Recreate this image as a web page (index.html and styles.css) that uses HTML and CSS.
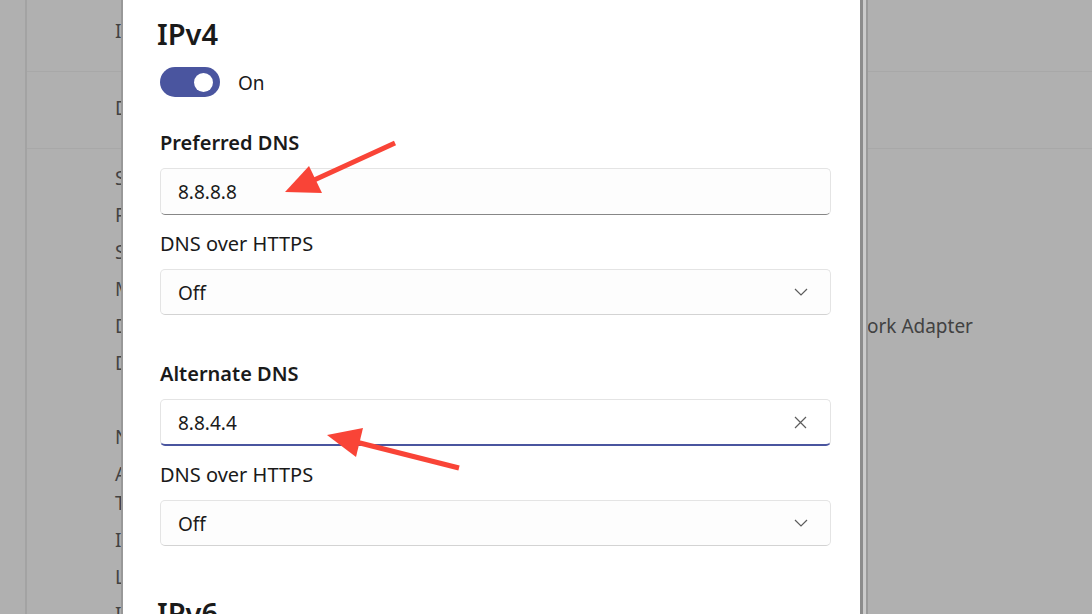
FILE: index.html
```html
<!DOCTYPE html>
<html lang="en">
<head>
<meta charset="utf-8">
<title>Edit DNS settings</title>
<link rel="stylesheet" href="styles.css">
</head>
<body>
<div class="page">
  <div class="rail"></div>
  <div class="main">
    <div class="row row-first"><span class="lbl">IP assignment:</span></div>
    <div class="row row-second"><span class="lbl">DNS server assignment:</span></div>
    <div class="props">
      <div class="prop"><span class="lbl">SSID:</span></div>
      <div class="prop"><span class="lbl">Protocol:</span></div>
      <div class="prop"><span class="lbl">Security type:</span></div>
      <div class="prop"><span class="lbl">Manufacturer:</span></div>
      <div class="prop"><span class="lbl">Description:</span><span class="val">Network Adapter</span></div>
      <div class="prop"><span class="lbl">Driver version:</span></div>
      <div class="prop"><span class="lbl">&nbsp;</span></div>
      <div class="prop"><span class="lbl">Network band:</span></div>
      <div class="prop"><span class="lbl">Aggregated link speed (Receive/<br>Transmit):</span></div>
      <div class="prop"><span class="lbl">IPv6 address:</span></div>
      <div class="prop"><span class="lbl">Link-local IPv6 address:</span></div>
      <div class="prop"><span class="lbl">IPv4 address:</span></div>
    </div>
  </div>
</div>

<div class="dialog">
  <h2 class="heading">IPv4</h2>
  <div class="toggle-row">
    <span class="toggle"><span class="knob"></span></span>
    <span class="toggle-text">On</span>
  </div>

  <div class="label label-strong label-first">Preferred DNS</div>
  <div class="field field-rest"><span class="field-text">8.8.8.8</span></div>
  <div class="label">DNS over HTTPS</div>
  <div class="field select"><span class="field-text">Off</span>
    <svg class="chev" width="14" height="8" viewBox="0 0 14 8"><path d="M1 1 L7 7 L13 1" fill="none" stroke="#5c5c5c" stroke-width="1.2"/></svg>
  </div>

  <div class="label label-strong label-group">Alternate DNS</div>
  <div class="field field-focus"><span class="field-text">8.8.4.4</span>
    <svg class="clear" width="13" height="13" viewBox="0 0 13 13"><path d="M1 1 L12 12 M12 1 L1 12" fill="none" stroke="#5c5c5c" stroke-width="1.2"/></svg>
  </div>
  <div class="label">DNS over HTTPS</div>
  <div class="field select"><span class="field-text">Off</span>
    <svg class="chev" width="14" height="8" viewBox="0 0 14 8"><path d="M1 1 L7 7 L13 1" fill="none" stroke="#5c5c5c" stroke-width="1.2"/></svg>
  </div>

  <h2 class="heading heading-next">IPv6</h2>
</div>

<svg class="annot" width="1092" height="614" viewBox="0 0 1092 614">
  <line x1="395" y1="143" x2="312" y2="181" stroke="#f94437" stroke-width="5"/>
  <polygon points="285,192 309,166 322,193" fill="#f94437"/>
  <line x1="459" y1="468" x2="356" y2="442" stroke="#f94437" stroke-width="5"/>
  <polygon points="327,435 363,428 356,457" fill="#f94437"/>
</svg>
</body>
</html>
```
FILE: styles.css
```css
html, body {
  margin: 0;
  padding: 0;
  width: 1092px;
  height: 614px;
  overflow: hidden;
  background: #b0b0b0;
}

body {
  position: relative;
  font-family: "Noto Sans", "Open Sans", sans-serif;
}

/* background settings page under the dim overlay */
.page {
  display: flex;
  height: 614px;
}

.rail {
  width: 25px;
  flex: none;
  border-right: 2px solid #a3a3a3;
}

.main {
  flex: 1;
  color: #424242;
  font-size: 19px;
  line-height: 29px;
}

.row {
  box-sizing: border-box;
  border-bottom: 1px solid #a8a8a8;
  padding-left: 88px;
}

.row-first {
  height: 72px;
  padding-top: 17px;
}

.row-second {
  height: 77px;
  padding-top: 22px;
}

.props {
  display: flex;
  flex-direction: column;
  gap: 8px;
  padding: 15px 0 0 88px;
}

.prop {
  display: flex;
}

.lbl {
  display: block;
  width: 705px;
  flex: none;
  white-space: nowrap;
}

.val {
  white-space: nowrap;
}

/* dialog */
.dialog {
  position: absolute;
  left: 121px;
  top: 0;
  width: 742px;
  height: 640px;
  box-sizing: border-box;
  background: #ffffff;
  border-left: 2px solid #989898;
  border-right: 3px solid #8c8c8c;
  box-shadow: 3px 0 0 #cbcbcb, 5px 0 0 #9a9a9a;
  padding: 15px 29px 0 37px;
  color: #1a1a1a;
}

.heading {
  margin: 0 0 0 -3px;
  font-size: 29px;
  line-height: 38px;
  font-weight: 600;
}

.heading-next {
  margin-top: 48px;
}

.toggle-row {
  display: flex;
  align-items: center;
  gap: 18px;
  margin-top: 14px;
  height: 30px;
}

.toggle {
  width: 60px;
  height: 30px;
  border-radius: 15px;
  background: #4a559f;
  display: flex;
  align-items: center;
  justify-content: flex-end;
  padding-right: 7px;
  box-sizing: border-box;
}

.knob {
  width: 19px;
  height: 19px;
  border-radius: 50%;
  background: #ffffff;
}

.toggle-text {
  font-size: 19px;
  padding-top: 2px;
}

.label {
  font-size: 20px;
  line-height: 28px;
  margin-top: 15px;
}

.label-strong {
  font-weight: 600;
}

.label-first {
  margin-top: 32px;
}

.label-group {
  margin-top: 45px;
}

.field {
  box-sizing: border-box;
  height: 47px;
  margin-top: 11px;
  border: 1px solid #e4e4e4;
  border-radius: 5px;
  background: #fdfdfd;
  display: flex;
  align-items: center;
  padding: 0 22px 0 17px;
  font-size: 19px;
}

.field-text {
  flex: 1;
  padding-top: 1px;
}

.field-rest {
  border-bottom: 1px solid #878787;
}

.field-focus {
  border-bottom: 2px solid #4a559f;
  background: #ffffff;
}

.select {
  height: 46px;
  border-bottom-color: #d3d3d3;
}

.chev {
  display: block;
}

.clear {
  display: block;
  margin-right: 1px;
}

.annot {
  position: absolute;
  left: 0;
  top: 0;
  pointer-events: none;
}
```
